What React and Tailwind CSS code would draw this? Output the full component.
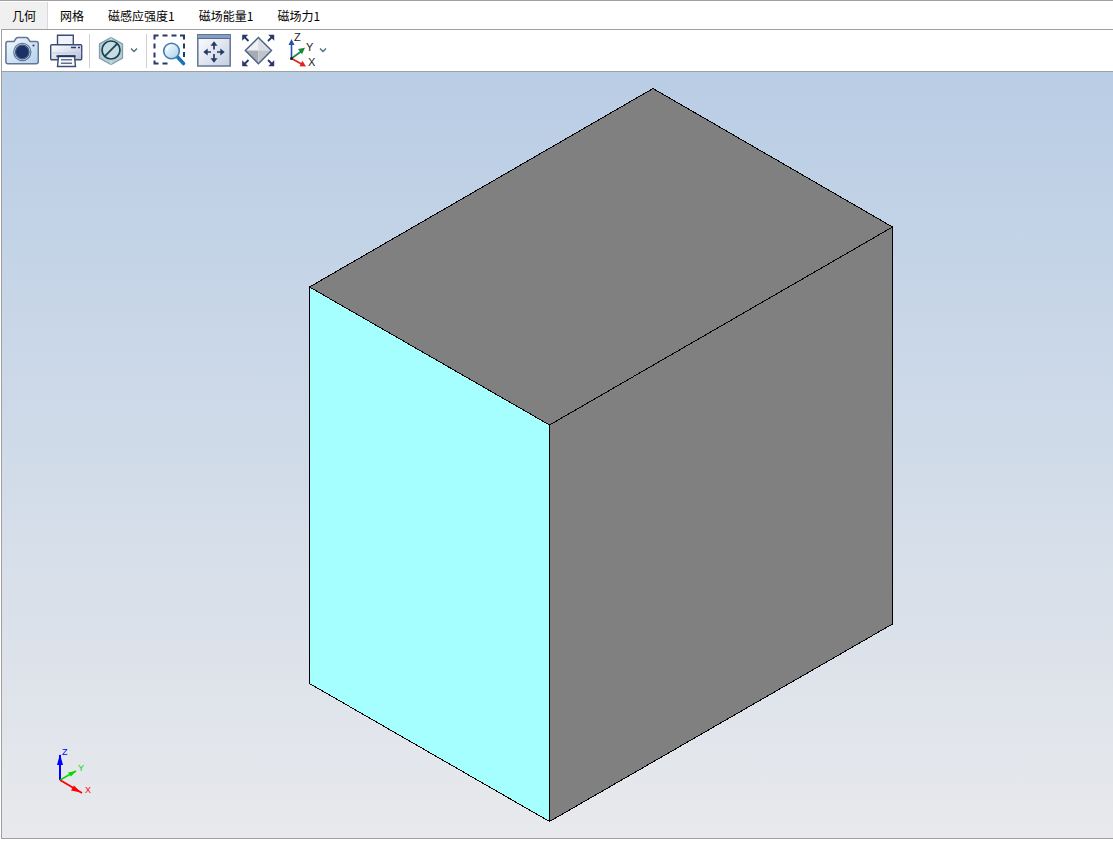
import { useState } from "react";

const TABS = ["几何", "网格", "磁感应强度1", "磁场能量1", "磁场力1"];

function CameraIcon() {
  return (
    <svg width="34" height="34" viewBox="0 0 34 34" fill="none">
      <defs>
        <linearGradient id="camBody" x1="0" y1="0" x2="1" y2="1">
          <stop offset="0" stopColor="#f2f8fd" />
          <stop offset="1" stopColor="#b5d0ec" />
        </linearGradient>
      </defs>
      <path
        d="M2 7.500h7l2-3q.700-1 2-1h8q1.300 0 2 1l2 3h6q2.300 0 2.300 2v18q0 2.300-2.300 2.300H3Q.900 29.800.900 27.500v-18q0-2 2.100-2z"
        fill="url(#camBody)"
        stroke="#5f7699"
        strokeWidth="1.500"
      />
      <circle cx="17.300" cy="18" r="8.600" fill="#dce8f4" stroke="#5f7699" strokeWidth="1.200" />
      <circle cx="17.300" cy="18" r="6.800" fill="#1c3164" stroke="#41577f" strokeWidth="1.300" />
      <circle cx="28.500" cy="11.500" r="1.100" fill="#2d4373" />
    </svg>
  );
}

function PrinterIcon() {
  return (
    <svg width="34" height="34" viewBox="0 0 34 34" fill="none" stroke="#3b4d73" strokeWidth="1.400">
      <defs>
        <linearGradient id="printBody" x1="0" y1="0" x2="1" y2="1">
          <stop offset="0" stopColor="#ffffff" />
          <stop offset="1" stopColor="#b7c1d8" />
        </linearGradient>
      </defs>
      <path d="M8.500 12V1.200h15.800V12" fill="#f0f4fa" />
      <rect x="1.700" y="10.700" width="31" height="15" rx="1" fill="url(#printBody)" />
      <path d="M2 19h30.500" stroke="#c2cadc" strokeWidth="1" />
      <path d="M22 13.500h5m2 0h2" stroke="#2c3c68" strokeWidth="1.300" />
      <path d="M9.500 22.200h16l1 10.300h-18z" fill="#f8fafc" />
      <path d="M7.500 22.200h19" stroke="#233564" strokeWidth="2" />
      <path d="M12 25.800h11M12 29.200h11" stroke="#62718f" strokeWidth="1.400" />
    </svg>
  );
}

function HiddenIcon() {
  return (
    <svg width="28" height="34" viewBox="0 0 28 34" fill="none">
      <path d="M15 3.500l11.500 6.500v14L15 30.500 3.500 24V10z" fill="#b8ced5" stroke="#829fab" strokeWidth="1.300" />
      <path d="M15 3.500v27" stroke="#d3e2e7" />
      <circle cx="15" cy="16" r="9" fill="#c9dbe2" stroke="#164353" strokeWidth="1.700" />
      <path d="M8.700 22.300L21.300 9.700" stroke="#164353" strokeWidth="1.700" />
    </svg>
  );
}

function ZoomAreaIcon() {
  return (
    <svg width="34" height="34" viewBox="0 0 34 34" fill="none">
      <defs>
        <linearGradient id="lens" x1="0" y1="0" x2="1" y2="1">
          <stop offset="0" stopColor="#ffffff" />
          <stop offset="1" stopColor="#a9d0ed" />
        </linearGradient>
      </defs>
      <path
        d="M1.500 5.500v-4h4M9.500 1.500h5M18.500 1.500h5M27 1.500h4v4M1.500 9.500v5M1.500 18.500v5M1.500 26.500v3h4M9.500 29.500h5M31 9.500v5M31 18v5"
        stroke="#263968"
        strokeWidth="2"
      />
      <path d="M24.500 23l6 6.500" stroke="#1c72b4" strokeWidth="3.600" strokeLinecap="round" />
      <circle cx="18.500" cy="17" r="7.800" fill="url(#lens)" stroke="#3d7fae" strokeWidth="1.600" />
      <path d="M13.800 16.700a5 5 0 0 1 4.500-4.500" stroke="#ffffff" strokeWidth="1.500" />
    </svg>
  );
}

function FitIcon() {
  return (
    <svg width="34" height="34" viewBox="0 0 34 34" fill="none">
      <defs>
        <linearGradient id="fitPane" x1="0" y1="0" x2="1" y2="1">
          <stop offset="0" stopColor="#ffffff" />
          <stop offset="1" stopColor="#c4cee1" />
        </linearGradient>
      </defs>
      <rect x="0.800" y="0.500" width="32.400" height="31.500" fill="url(#fitPane)" stroke="#637594" strokeWidth="1.500" />
      <rect x="1.500" y="1" width="31" height="3" fill="#849dc4" />
      <path d="M1 4.500h32" stroke="#536a93" />
      <path d="M17 11v4.500M17 20v5M9 18h5M20 18h5" stroke="#263968" strokeWidth="1.700" />
      <path
        d="M17 7.300l3.500 4.400h-7zM17 28.700l3.500-4.400h-7zM6.300 18l4.400-3.500v7zM27.700 18l-4.400-3.500v7z"
        fill="#263968"
      />
    </svg>
  );
}

function DiamondIcon() {
  return (
    <svg width="34" height="34" viewBox="0 0 34 34" fill="none">
      <path d="M17.400 3.500L30.500 16.600H4.300z" fill="#eef0f3" />
      <path d="M17.400 3.500L30.500 16.600H17.400z" fill="#dadde3" />
      <path d="M4.300 16.600h13.100v13.100z" fill="#a7abb4" />
      <path d="M30.500 16.600H17.400v13.100z" fill="#c1c4cb" />
      <path d="M17.400 3.500l13.100 13.100-13.100 13.100L4.300 16.600z" stroke="#4c5f82" strokeWidth="1.400" />
      <path d="M3 2.500L7.500 7M31.500 2.500L27 7M3 30.500L7.500 26M31.500 30.500L27 26" stroke="#263968" strokeWidth="1.800" />
      <path
        d="M1.200 .800h6l-6 6zM33.200 .800h-6l6 6zM1.200 32.300h6l-6-6zM33.200 32.300h-6l6-6z"
        fill="#263968"
      />
    </svg>
  );
}

function AxesIcon() {
  return (
    <svg width="34" height="34" viewBox="0 0 34 34" fill="none" className="overflow-visible">
      <path d="M6.500 24.500V9" stroke="#2550ad" strokeWidth="1.600" />
      <path d="M6.500 5l3 6h-6z" fill="#2550ad" />
      <path d="M6.500 24.500l9.500-7" stroke="#15893a" strokeWidth="1.600" />
      <path d="M20 13.700l-3 6.500-4-5.200z" fill="#15893a" />
      <path d="M6.500 24.500l10 5.500" stroke="#e3211f" strokeWidth="1.600" />
      <path d="M21 32.500l-6.600-.300 3-5.500z" fill="#e3211f" />
      <circle cx="6.500" cy="24.500" r="1.500" fill="#1c1c1c" />
      <g fill="#222222" className="font-['Liberation_Sans'] text-[11px]">
        <text x="9" y="7">Z</text>
        <text x="21" y="17">Y</text>
        <text x="23" y="32">X</text>
      </g>
    </svg>
  );
}

function Chevron() {
  return (
    <svg width="8" height="34" viewBox="0 0 8 34" fill="none" stroke="#527080" strokeWidth="1.500">
      <path d="M1 14.500l3 3 3-3" />
    </svg>
  );
}

function ToolButton({ label, menu, children }) {
  return (
    <button type="button" aria-label={label} aria-haspopup={menu ? "menu" : undefined} className="flex shrink-0">
      {children}
    </button>
  );
}

function Separator() {
  return <div className="mx-1.5 h-[34px] w-px bg-[#d0d0d0]" />;
}

function Toolbar() {
  return (
    <div className="flex h-[41px] items-center bg-white pl-[3px]">
      <div className="flex gap-2.5">
        <ToolButton label="截图"><CameraIcon /></ToolButton>
        <ToolButton label="打印"><PrinterIcon /></ToolButton>
      </div>
      <Separator />
      <div className="flex pr-0.5">
        <ToolButton label="隐藏" menu>
          <span className="flex gap-1.5"><HiddenIcon /><Chevron /></span>
        </ToolButton>
      </div>
      <Separator />
      <div className="flex gap-2.5">
        <ToolButton label="框选缩放"><ZoomAreaIcon /></ToolButton>
        <ToolButton label="适合窗口"><FitIcon /></ToolButton>
        <ToolButton label="缩放到全部"><DiamondIcon /></ToolButton>
        <ToolButton label="视图方向" menu>
          <AxesIcon />
          <Chevron />
        </ToolButton>
      </div>
    </div>
  );
}

// Orientation triad in the lower left corner of the view
function Triad() {
  return (
    <svg width="40" height="52" viewBox="0 0 40 52" fill="none" className="absolute bottom-10 left-[54px]">
      <path d="M4 34V9" stroke="#0000ff" strokeWidth="2" />
      <path d="M4 8l3 11H1z" fill="#0000ff" />
      <path d="M4 34l16-9" stroke="#00dc00" strokeWidth="1.600" />
      <path d="M20 25l-5 5.500-3-4z" fill="#00dc00" />
      <path d="M4 34l22 13" stroke="#ff0000" strokeWidth="1.800" />
      <path d="M25 46.500l-10-2 3-5z" fill="#ff0000" />
      <g className="font-['Liberation_Sans'] text-[9px]">
        <text x="6" y="9" fill="#0000ff">Z</text>
        <text x="22" y="25" fill="#00dc00">Y</text>
        <text x="29" y="47" fill="#ff0000">X</text>
      </g>
    </svg>
  );
}

function Viewport() {
  return (
    <div className="relative min-h-0 flex-1 bg-linear-to-b from-[#b9cde5] to-[#e8e9ec]">
      <svg
        viewBox="0 0 1111 766"
        className="block h-full w-full"
        stroke="#000000"
        strokeWidth="1"
        strokeLinejoin="round"
        shapeRendering="crispEdges"
      >
        <path d="M651 16.500L890.500 155 547.500 353 307.500 215z" fill="#808080" />
        <path d="M307.500 215L547.500 353V749.500L307.500 611.500z" fill="#a6ffff" />
        <path d="M547.500 353L890.500 155V552L547.500 749.500z" fill="#808080" />
      </svg>
      <Triad />
    </div>
  );
}

export default function App() {
  const [active, setActive] = useState(0);

  return (
    <div className="flex h-screen flex-col border-t border-[#a0a0a0] bg-white pb-[11px] font-['Noto_Sans_CJK_SC',sans-serif] text-black">
      <div role="tablist" className="flex h-7 shrink-0 pt-px">
        {TABS.map((tab, i) => (
          <button
            key={tab}
            type="button"
            role="tab"
            aria-selected={i === active}
            onClick={() => setActive(i)}
            className={`border-r pl-3 pr-[11px] text-xs ${i === active ? "border-[#d9d9d9] bg-[#f0f0f0]" : "border-transparent"}`}
          >
            {tab}
          </button>
        ))}
      </div>
      <div className="ml-px flex min-h-0 flex-1 flex-col border-y border-l border-[#a0a0a0]">
        <Toolbar />
        <div className="h-px shrink-0 bg-[#a0a0a0]" />
        <Viewport />
      </div>
    </div>
  );
}
